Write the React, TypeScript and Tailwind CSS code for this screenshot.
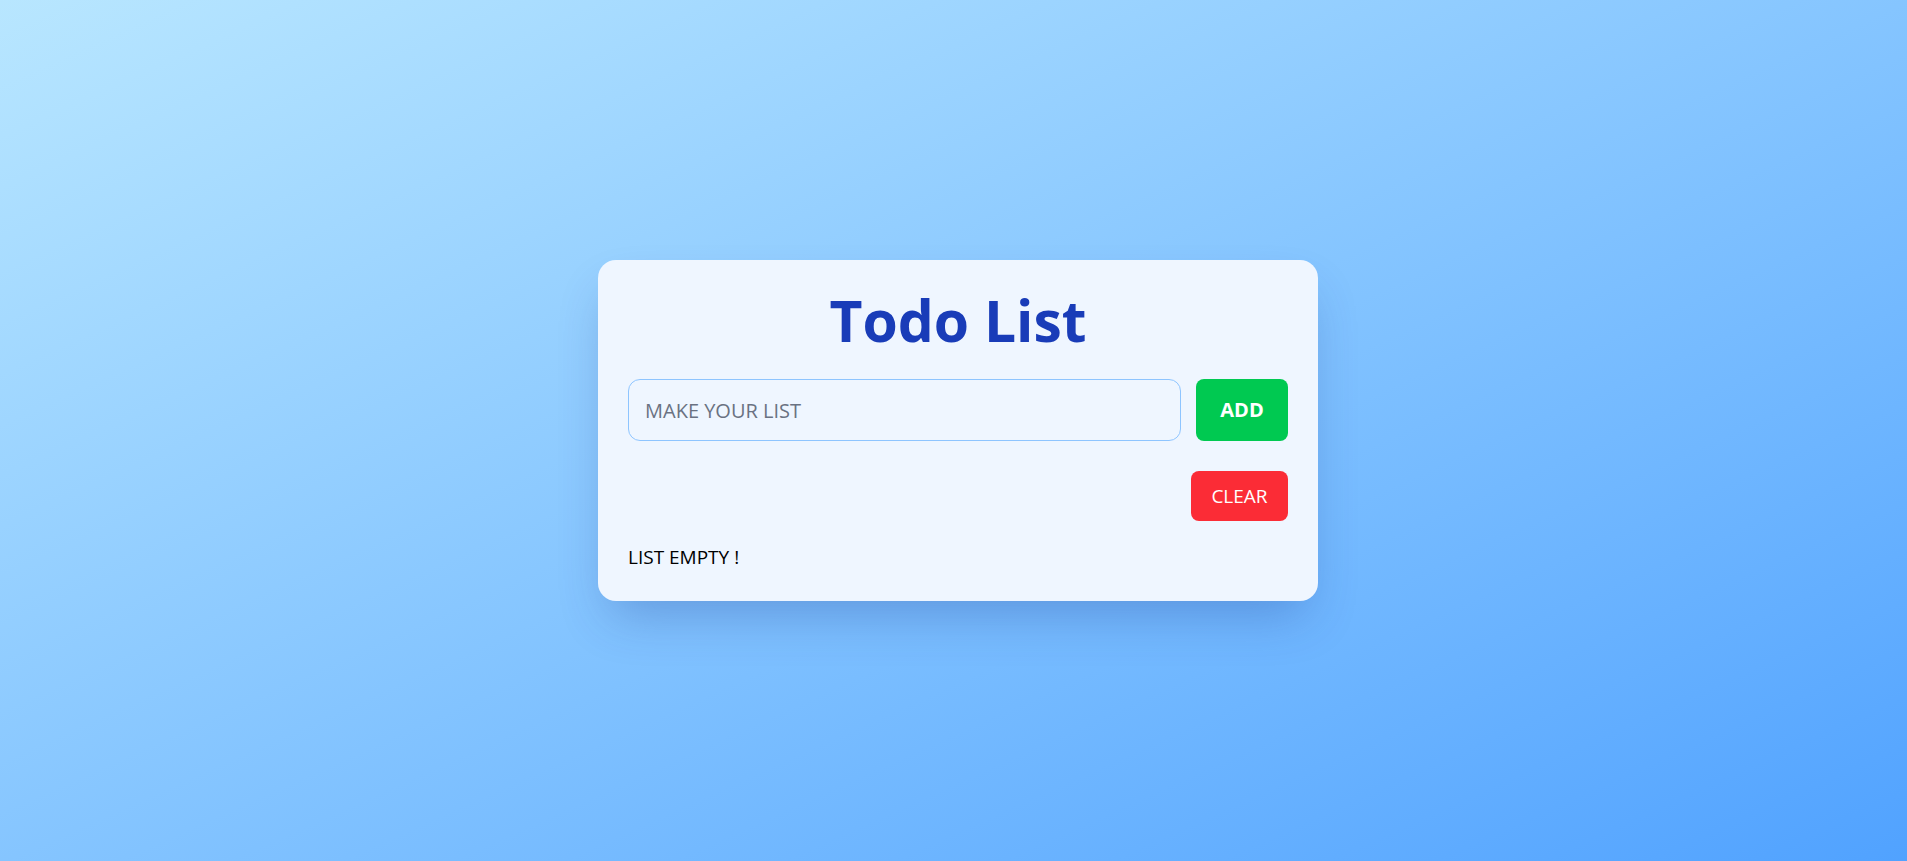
import { useState } from 'react';

export default function App() {
  const [items, setItems] = useState<string[]>([]);
  const [text, setText] = useState('');

  const addItem = () => {
    if (!text.trim()) return;
    setItems([...items, text.trim()]);
    setText('');
  };

  return (
    <main className="flex min-h-screen items-center justify-center bg-linear-to-br from-sky-200 to-blue-400 pl-[9px] font-['Open_Sans',sans-serif]">
      <div className="w-[720px] rounded-[18px] bg-blue-50 px-[30px] py-[32px] shadow-2xl shadow-blue-900/30">
        <h1 className="mb-[30px] text-center text-[57px] leading-none font-bold text-blue-800">
          Todo List
        </h1>
        <div className="flex gap-[15px]">
          <input
            value={text}
            onChange={(e) => setText(e.target.value)}
            placeholder="MAKE YOUR LIST"
            className="h-[62px] flex-1 rounded-xl border border-blue-300 bg-transparent px-4 text-[20px] text-gray-900 outline-none placeholder:text-gray-500"
          />
          <button
            onClick={addItem}
            className="h-[62px] w-[92px] rounded-lg bg-green-500 text-[20px] font-bold text-white"
          >
            ADD
          </button>
        </div>
        <div className="mt-[30px] flex justify-end">
          <button
            onClick={() => setItems([])}
            className="h-[50px] w-[97px] rounded-lg bg-red-500 text-[19px] text-white"
          >
            CLEAR
          </button>
        </div>
        {items.length === 0 ? (
          <p className="mt-6 text-[19px] leading-6 text-black">LIST EMPTY !</p>
        ) : (
          <ul className="mt-6 flex flex-col gap-2 text-[19px]">
            {items.map((item, i) => (
              <li key={i}>{item}</li>
            ))}
          </ul>
        )}
      </div>
    </main>
  );
}
